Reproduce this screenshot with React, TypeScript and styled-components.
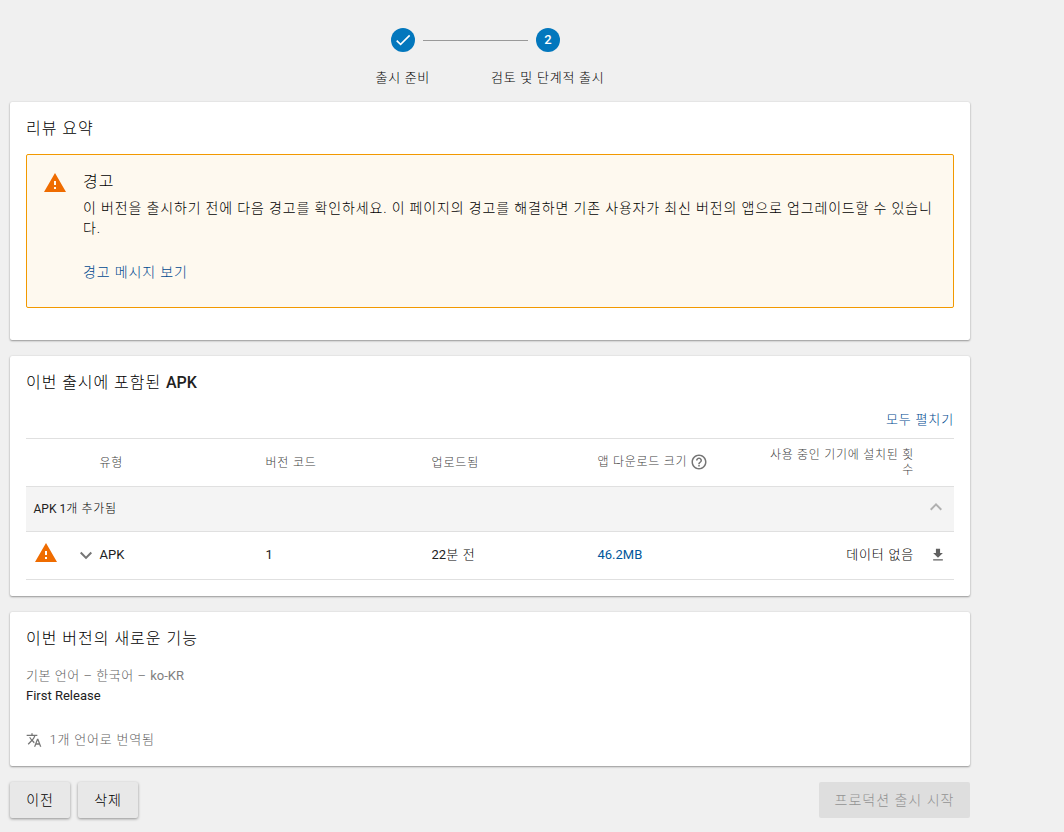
import React from "react";
import styled, { createGlobalStyle } from "styled-components";

const GlobalStyle = createGlobalStyle`
  * { box-sizing: border-box; }
  html, body { margin: 0; padding: 0; background: #f0f0f0; }
  body {
    font-family: Roboto, "Noto Sans CJK KR", sans-serif;
    font-size: 13px;
    line-height: 20px;
    color: #000;
  }
`;

const Page = styled.main`
  width: 980px;
  height: 832px;
  padding: 28px 10px 0;
  overflow: hidden;
`;

const Stepper = styled.header`
  height: 74px;
  display: flex;
  flex-direction: column;
  gap: 16px;
`;

const StepTrack = styled.div`
  display: flex;
  align-items: center;
  padding-left: 381px;
`;

const StepCircle = styled.div`
  width: 24px;
  height: 24px;
  border-radius: 50%;
  background: #0277bd;
  color: #fff;
  font-weight: 500;
  line-height: 24px;
  text-align: center;
`;

const StepLine = styled.div`
  width: 105px;
  height: 1px;
  margin: 0 8px;
  background: #999;
`;

const StepLabels = styled.div`
  display: flex;
  justify-content: center;
  gap: 61px;
`;

const Text = styled.span<{ $spacing?: number; $weight?: number; $color?: string }>`
  display: inline-block;
  white-space: nowrap;
  letter-spacing: ${(p) => p.$spacing ?? 0}px;
  font-weight: ${(p) => p.$weight ?? 300};
  color: ${(p) => p.$color ?? "inherit"};
`;

const Card = styled.section<{ $height: number }>`
  height: ${(p) => p.$height}px;
  margin-bottom: 16px;
  padding: 17px 16px 16px;
  background: #fff;
  border-radius: 2px;
  box-shadow: 0 1px 2px rgba(0, 0, 0, 0.36), 0 0 2px rgba(0, 0, 0, 0.1);
`;

const CardTitle = styled.h2`
  margin: 0;
  font-size: 16px;
  line-height: 20px;
  font-weight: 300;
`;

const Warning = styled.div`
  display: flex;
  height: 154px;
  margin-top: 15px;
  padding: 16px 16px 16px 15.5px;
  border: 1px solid #f29900;
  border-radius: 2px;
  background: #fef9ef;
`;

const WarningIconBox = styled.div`
  width: 40.5px;
  display: flex;
  align-items: flex-start;
`;

const WarningBody = styled.div`
  flex: 1;
  padding-top: 1px;
  font-size: 14px;
`;

const WarningTitle = styled.h3`
  margin: 0 0 6px;
  font-size: 16px;
  line-height: 20px;
  font-weight: 300;
`;

const WarningText = styled.p`
  margin: 0 0 24px;
  line-height: 20px;
`;

const Link = styled.a`
  color: #004a8f;
  text-decoration: none;
`;

const ExpandAll = styled.div`
  height: 45px;
  padding-top: 17px;
  text-align: right;
`;

const Row = styled.div<{ $height: number; $shaded?: boolean }>`
  height: ${(p) => p.$height}px;
  display: grid;
  grid-template-columns: 73.5px 166px 166px 166px 166px 150.5px 40px;
  align-items: center;
  border-top: 1px solid #e0e0e0;
  background: ${(p) => (p.$shaded ? "#f4f4f4" : "#fff")};
`;

const GroupRow = styled(Row)`
  display: flex;
  justify-content: space-between;
  padding: 0 6px 4px 7.5px;
`;

const GroupLabel = styled.div`
  padding-top: 4px;
  font-size: 12px;
`;

const LastRow = styled(Row)`
  padding-bottom: 2px;
  border-bottom: 1px solid #e0e0e0;
`;

const HeadRow = styled(Row)`
  font-size: 12px;
  line-height: 15px;
  color: #424242;
`;

const Cell = styled.div<{ $right?: boolean; $lowered?: boolean }>`
  display: flex;
  align-items: center;
  padding-top: ${(p) => (p.$lowered ? 2 : 0)}px;
  justify-content: ${(p) => (p.$right ? "flex-end" : "flex-start")};
  text-align: ${(p) => (p.$right ? "right" : "left")};
`;

const HelpBox = styled.div`
  padding: 0 0 2px 3px;
`;

const StatusCell = styled.div`
  display: flex;
  align-items: flex-start;
  justify-content: space-between;
  padding: 0 2px 0 7.5px;
`;

const ChevronBox = styled.div`
  padding-top: 3px;
`;

const DownloadCell = styled.div`
  display: flex;
  padding: 1px 0 0 15px;
`;

const Notes = styled.div`
  margin-top: 17px;
`;

const NotesLine = styled.div`
  height: 20px;
`;

const Translated = styled.div`
  display: flex;
  align-items: center;
  gap: 7.5px;
  margin-top: 24px;
`;

const Actions = styled.footer`
  display: flex;
  gap: 8px;
`;

const Button = styled.button`
  height: 36px;
  width: 60px;
  padding: 0 0 1px;
  border: 0;
  border-radius: 2px;
  background: #e8e8e8;
  color: #000;
  font: inherit;
  font-size: 14px;
  box-shadow: 0 1px 3px rgba(0, 0, 0, 0.4);

  &:disabled {
    width: 151px;
    margin-left: auto;
    background: #dedede;
    color: #939393;
    box-shadow: none;
  }
`;

const Svg = styled.svg`
  display: block;
  flex: none;
`;

const Icon = ({ d, size, color, box = "0 0 24 24" }: { d: string; size: number; color: string; box?: string }) => (
  <Svg width={size} height={size} viewBox={box} fill={color}>
    <path d={d} />
  </Svg>
);

const CHECK = "M9 16.17L4.83 12l-1.42 1.41L9 19 21 7l-1.41-1.41z";
const WARN = "M1 21h22L12 2 1 21zm12-3h-2v-2h2v2zm0-4h-2v-4h2v4z";
const DOWN = "M7.41 7.84L12 12.42l4.59-4.58L18 9.25l-6 6-6-6z";
const UP = "M7.41 15.41L12 10.83l4.59 4.58L18 14l-6-6-6 6z";
const HELP =
  "M11 18h2v-2h-2v2zm1-16C6.48 2 2 6.48 2 12s4.48 10 10 10 10-4.48 10-10S17.52 2 12 2zm0 18c-4.41 0-8-3.59-8-8s3.59-8 8-8 8 3.59 8 8-3.59 8-8 8zm0-14c-2.21 0-4 1.79-4 4h2c0-1.1.9-2 2-2s2 .9 2 2c0 2-3 1.75-3 5h2c0-2.25 3-2.5 3-5 0-2.21-1.79-4-4-4z";
const DOWNLOAD = "M19 9h-4V3H9v6H5l7 7 7-7zM5 18v2h14v-2H5z";
const TRANSLATE =
  "M12.87 15.07l-2.54-2.51.03-.03c1.74-1.94 2.98-4.17 3.71-6.53H17V4h-7V2H8v2H1v1.99h11.17C11.5 7.92 10.44 9.75 9 11.35 8.07 10.32 7.3 9.19 6.69 8h-2c.73 1.63 1.73 3.17 2.98 4.56l-5.09 5.02L4 19l5-5 3.11 3.11.76-2.04zM18.5 10h-2L12 22h2l1.12-3h4.75L21 22h2l-4.5-12zm-2.62 7l1.62-4.33L19.12 17h-3.24z";

export default function App() {
  return (
    <>
      <GlobalStyle />
      <Page>
        <Stepper>
          <StepTrack>
            <StepCircle>
              <Icon d={CHECK} size={24} color="#fff" box="-3 -3 30 30" />
            </StepCircle>
            <StepLine />
            <StepCircle>2</StepCircle>
          </StepTrack>
          <StepLabels>
            <Text $spacing={0.7}>출시 준비</Text>
            <Text $spacing={0.75}>검토 및 단계적 출시</Text>
          </StepLabels>
        </Stepper>

        <Card $height={238}>
          <CardTitle><Text $spacing={1}>리뷰 요약</Text></CardTitle>
          <Warning>
            <WarningIconBox><Icon d={WARN} size={24} color="#ef6c00" /></WarningIconBox>
            <WarningBody>
              <WarningTitle><Text $spacing={1}>경고</Text></WarningTitle>
              <WarningText>
                <Text $spacing={0.85}>이 버전을 출시하기 전에 다음 경고를 확인하세요. 이 페이지의 경고를 해결하면 기존 사용자가 최신 버전의 앱으로 업그레이드할 수 있습니</Text>
                <br />
                <Text $spacing={0.85}>다.</Text>
              </WarningText>
              <Link><Text $spacing={0.87}>경고 메시지 보기</Text></Link>
            </WarningBody>
          </Warning>
        </Card>

        <Card $height={240}>
          <CardTitle>
            <Text $spacing={0.95}>이번 출시에 포함된&nbsp;</Text>
            <Text $weight={500} $color="#212121">APK</Text>
          </CardTitle>
          <ExpandAll><Link><Text $spacing={0.85}>모두 펼치기</Text></Link></ExpandAll>
          <HeadRow $height={48}>
            <div />
            <Cell $lowered><Text $spacing={0.8}>유형</Text></Cell>
            <Cell $lowered><Text $spacing={0.8}>버전 코드</Text></Cell>
            <Cell $lowered><Text $spacing={0.85}>업로드됨</Text></Cell>
            <Cell>
              <Text $spacing={0.75}>앱 다운로드 크기</Text>
              <HelpBox><Icon d={HELP} size={18} color="#757575" /></HelpBox>
            </Cell>
            <Cell $right><Text $spacing={0.73}>사용 중인 기기에 설치된 횟<br />수</Text></Cell>
          </HeadRow>
          <GroupRow $height={45} $shaded>
            <GroupLabel>
              <Text $weight={400} $color="#212121">APK 1</Text>
              <Text $spacing={0.7}>개 추가됨</Text>
            </GroupLabel>
            <Icon d={UP} size={24} color="#b0b0b0" />
          </GroupRow>
          <LastRow $height={49}>
            <StatusCell>
              <Icon d={WARN} size={24} color="#ef6c00" />
              <ChevronBox><Icon d={DOWN} size={24} color="#757575" /></ChevronBox>
            </StatusCell>
            <Cell><Text $weight={400} $color="#212121">APK</Text></Cell>
            <Cell><Text $weight={400} $color="#212121">1</Text></Cell>
            <Cell>
              <Text $weight={400} $color="#212121">22</Text>
              <Text $spacing={0.8}>분 전</Text>
            </Cell>
            <Cell><Text $weight={400} $color="#01579b">46.2MB</Text></Cell>
            <Cell $right><Text $spacing={0.8}>데이터 없음</Text></Cell>
            <DownloadCell><Icon d={DOWNLOAD} size={18} color="#616161" box="-1 -1 26 26" /></DownloadCell>
          </LastRow>
        </Card>

        <Card $height={154}>
          <CardTitle><Text $spacing={1}>이번 버전의 새로운 기능</Text></CardTitle>
          <Notes>
            <NotesLine>
              <Text $spacing={0.55} $color="#616161">기본 언어 – 한국어 –&nbsp;</Text>
              <Text $weight={400} $color="#808080">ko-KR</Text>
            </NotesLine>
            <NotesLine><Text $weight={400} $color="#212121">First Release</Text></NotesLine>
          </Notes>
          <Translated>
            <Icon d={TRANSLATE} size={16} color="#757575" />
            <Text $spacing={0.8} $color="#616161">1개 언어로 번역됨</Text>
          </Translated>
        </Card>

        <Actions>
          <Button><Text $spacing={0.9}>이전</Text></Button>
          <Button><Text $spacing={0.9}>삭제</Text></Button>
          <Button disabled><Text $spacing={1}>프로덕션 출시 시작</Text></Button>
        </Actions>
      </Page>
    </>
  );
}
